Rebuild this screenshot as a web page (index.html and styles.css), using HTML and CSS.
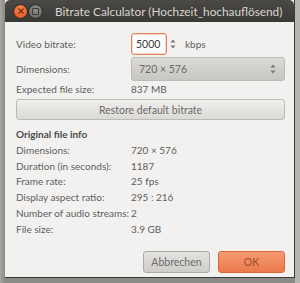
FILE: index.html
```html
<!DOCTYPE html>
<html>
<head>
<meta charset="utf-8">
<link rel="stylesheet" href="styles.css">
</head>
<body>
<div class="desktop">
  <div class="window">
    <div class="titlebar">
      <span class="wbtn close"><svg width="8" height="8" viewBox="0 0 8 8"><path d="M1.5 1.5 L6.5 6.5 M6.5 1.5 L1.5 6.5" stroke="#7a2a10" stroke-width="1.4"/></svg></span>
      <span class="wbtn max"><span class="sq"></span></span>
      <span class="title">Bitrate Calculator (Hochzeit_hochauflösend)</span>
    </div>
    <div class="body">
      <div class="grid">
        <div class="lbl">Video bitrate:</div>
        <div class="ctl">
          <div class="spin">5000</div>
          <span class="arrows"><svg width="6" height="12" viewBox="0 0 6 12"><path d="M0.5 4.5 L3 1.5 L5.5 4.5 Z M0.5 7.5 L3 10.5 L5.5 7.5 Z" fill="#777"/></svg></span>
          <span class="unit">kbps</span>
        </div>
        <div class="lbl">Dimensions:</div>
        <div class="ctl">
          <div class="combo"><span>720 × 576</span><svg width="6" height="12" viewBox="0 0 6 12"><path d="M0.5 4.5 L3 1.5 L5.5 4.5 Z M0.5 7.5 L3 10.5 L5.5 7.5 Z" fill="#777"/></svg></div>
        </div>
        <div class="lbl">Expected file size:</div>
        <div class="val">837 MB</div>
      </div>
      <div class="restore">Restore default bitrate</div>
      <div class="section">Original file info</div>
      <div class="info">
        <div class="lbl">Dimensions:</div><div class="val">720 × 576</div>
        <div class="lbl">Duration (in seconds):</div><div class="val">1187</div>
        <div class="lbl">Frame rate:</div><div class="val">25 fps</div>
        <div class="lbl">Display aspect ratio:</div><div class="val">295 : 216</div>
        <div class="lbl">Number of audio streams:</div><div class="val">2</div>
        <div class="lbl">File size:</div><div class="val">3.9 GB</div>
      </div>
      <div class="actions">
        <div class="btn cancel">Abbrechen</div>
        <div class="btn ok">OK</div>
      </div>
    </div>
  </div>
</div>
</body>
</html>
```
FILE: styles.css
```css
html, body {
  margin: 0;
  padding: 0;
}
body {
  width: 300px;
  height: 283px;
  overflow: hidden;
  background: #9a9896;
  font-family: Lato, "Liberation Sans", sans-serif;
  font-size: 10px;
  color: #5e5e5e;
}
.desktop {
  padding-left: 5px;
  height: 283px;
  background: linear-gradient(90deg, #a8a6a3 0, #8c8a87 5px, #8c8a87 295px, #b8b6b3 295px);
}
.window {
  width: 289px;
  border-right: 1px solid #3a3a38;
  box-shadow: 0 1px 0 #3a3a38;
  background: #f2f1f0;
}
.titlebar {
  height: 22px;
  background: linear-gradient(#4a4945, #3a3935);
  border-radius: 5px 5px 0 0;
  display: flex;
  align-items: center;
  padding-left: 9px;
  gap: 2px;
}
.wbtn {
  width: 13px;
  height: 13px;
  border-radius: 50%;
  display: flex;
  align-items: center;
  justify-content: center;
}
.close {
  background: radial-gradient(circle at 50% 35%, #f6874d, #dd4e1c);
  box-shadow: 0 0 0 1px #2f2e2b;
}
.max {
  background: radial-gradient(circle at 50% 35%, #8c8b86, #65645f);
  box-shadow: 0 0 0 1px #2f2e2b;
}
.max .sq {
  width: 5px;
  height: 5px;
  border: 1px solid #3c3b37;
  border-radius: 1px;
}
.title {
  margin-left: 11px;
  color: #d8d6cf;
  font-size: 11.8px;
  white-space: nowrap;
}
.body {
  padding: 11px 9px 0 11px;
  height: 255px;
  box-sizing: border-box;
  display: flex;
  flex-direction: column;
}
.grid {
  display: grid;
  grid-template-columns: 115px 1fr;
  row-gap: 2px;
  align-items: center;
}
.lbl { white-space: nowrap; }
.ctl {
  display: flex;
  align-items: center;
}
.spin {
  width: 36px;
  height: 22px;
  box-sizing: border-box;
  border: 1px solid #e8845a;
  border-radius: 3px;
  background: #fff;
  box-shadow: inset 0 0 0 1px #f6d8c8;
  display: flex;
  align-items: center;
  padding-left: 4px;
  color: #3a3a3a;
  font-size: 10.5px;
}
.arrows {
  display: flex;
  margin-left: 3px;
}
.unit { margin-left: 9px; }
.combo {
  flex: 1;
  height: 24px;
  box-sizing: border-box;
  border: 1px solid #bdbbb7;
  border-radius: 3px;
  background: linear-gradient(#dcdad7, #c8c6c2);
  display: flex;
  align-items: center;
  justify-content: space-between;
  padding: 0 8px 0 7px;
  color: #6a6a6a;
  font-size: 10.5px;
}
.restore {
  margin-top: 4px;
  height: 21px;
  box-sizing: border-box;
  border: 1px solid #bcbab6;
  border-radius: 3px;
  background: linear-gradient(#f0efed, #dcdad6);
  display: flex;
  align-items: center;
  justify-content: center;
  color: #6a6a6a;
  font-size: 10.5px;
}
.section {
  margin-top: 8px;
  font-weight: bold;
  color: #4a4a4a;
}
.info {
  margin-top: 2px;
  display: grid;
  grid-template-columns: 115px 1fr;
  grid-auto-rows: 15.8px;
  align-items: center;
}
.actions {
  margin-top: auto;
  margin-bottom: 4px;
  display: flex;
  justify-content: flex-end;
  gap: 8px;
}
.btn {
  width: 67px;
  height: 22px;
  box-sizing: border-box;
  border-radius: 3px;
  display: flex;
  align-items: center;
  justify-content: center;
  font-size: 10.5px;
}
.cancel {
  border: 1px solid #aeaca8;
  background: linear-gradient(#e4e3e0, #cfcdc9);
  color: #6a6a6a;
}
.ok {
  border: 1px solid #d8663c;
  background: linear-gradient(#f49a70, #ec7a4c);
  color: #9a4a2a;
}
```
